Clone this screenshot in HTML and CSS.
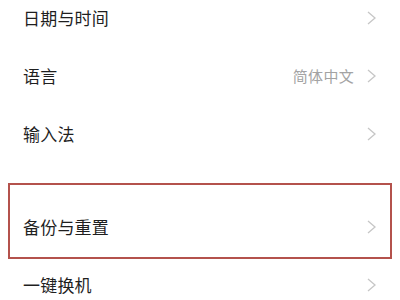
FILE: index.html
```html
<!DOCTYPE html>
<html lang="zh-CN">
<head>
<meta charset="utf-8">
<link rel="stylesheet" href="styles.css">
</head>
<body>
<div class="page">
  <div class="group">
    <div class="row"><span class="label">日期与时间</span><span class="right"><svg class="chev" viewBox="0 0 9 14"><path d="M1 1 L8 7 L1 13"/></svg></span></div>
    <div class="row"><span class="label">语言</span><span class="right"><span class="value">简体中文</span><svg class="chev" viewBox="0 0 9 14"><path d="M1 1 L8 7 L1 13"/></svg></span></div>
    <div class="row"><span class="label">输入法</span><span class="right"><svg class="chev" viewBox="0 0 9 14"><path d="M1 1 L8 7 L1 13"/></svg></span></div>
  </div>
  <div class="group">
    <div class="row highlighted"><span class="label">备份与重置</span><span class="right"><svg class="chev" viewBox="0 0 9 14"><path d="M1 1 L8 7 L1 13"/></svg></span><span class="mark"></span></div>
    <div class="row"><span class="label">一键换机</span><span class="right"><svg class="chev" viewBox="0 0 9 14"><path d="M1 1 L8 7 L1 13"/></svg></span></div>
  </div>
</div>
</body>
</html>
```

FILE: styles.css
```css
html, body {
  margin: 0;
  padding: 0;
  background: #ffffff;
}
body {
  width: 400px;
  height: 300px;
  overflow: hidden;
  font-family: "Noto Sans CJK SC", "Noto Sans", sans-serif;
}
.page {
  margin-top: -12px;
  display: flex;
  flex-direction: column;
  gap: 35px;
}
.group {
  display: flex;
  flex-direction: column;
}
.row {
  position: relative;
  height: 58px;
  padding: 0 24px 0 23px;
  display: flex;
  align-items: center;
  justify-content: space-between;
  box-sizing: border-box;
}
.label {
  font-size: 17px;
  color: #1f1f1f;
  letter-spacing: 0.2px;
}
.right {
  display: flex;
  align-items: center;
  gap: 13px;
}
.value {
  font-size: 15px;
  color: #a3a3a3;
  letter-spacing: 0.3px;
}
.chev {
  width: 9px;
  height: 14px;
  fill: none;
  stroke: #c6c6c6;
  stroke-width: 1.3;
  margin-top: 1px;
}
.mark {
  position: absolute;
  top: -14px;
  bottom: -4px;
  left: 8px;
  right: 8px;
  border: 2px solid #b4524c;
}
```
